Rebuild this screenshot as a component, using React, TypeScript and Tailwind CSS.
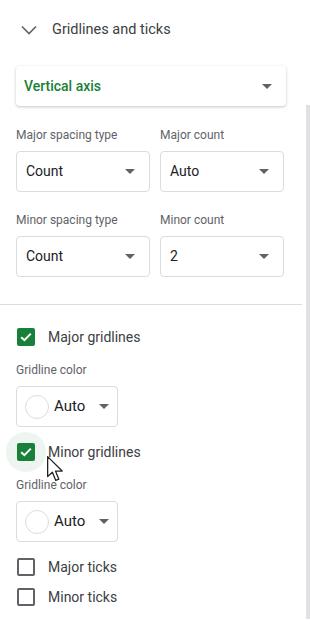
import React from 'react';

const Caret = () => (
  <svg width="10" height="5" viewBox="0 0 10 5" className="shrink-0">
    <path d="M0 0 L10 0 L5 5 Z" fill="#5f6368" />
  </svg>
);

const Select = ({ value, width }: { value: string; width: string }) => (
  <div className={`${width} h-[41px] border border-[#dadce0] rounded-[4px] flex items-center justify-between pl-[9px] pr-[14px]`}>
    <span className="text-[14px] text-[#202124]">{value}</span>
    <Caret />
  </div>
);

const ColorButton = () => (
  <div className="w-[102px] h-[41px] border border-[#dadce0] rounded-[4px] flex items-center pl-[8px]">
    <div className="w-[24px] h-[24px] rounded-full border border-[#dadce0] bg-white" />
    <span className="ml-[5px] text-[15px] text-[#202124]">Auto</span>
    <span className="ml-[14px]"><Caret /></span>
  </div>
);

const Checkbox = ({ checked, label, halo }: { checked: boolean; label: string; halo?: boolean }) => (
  <div className="flex items-center h-[18px] pl-[17px]">
    <div className="relative w-[18px] h-[18px]">
      {halo && <div className="absolute -left-[11px] -top-[11px] w-[40px] h-[40px] rounded-full bg-[#eef5f0]" />}
      {checked ? (
        <div className="relative w-[18px] h-[18px] rounded-[2px] bg-[#188038] flex items-center justify-center">
          <svg width="12" height="10" viewBox="0 0 12 10">
            <path d="M1.2 5.2 L4.4 8.2 L10.8 1.6" stroke="white" strokeWidth="2" fill="none" />
          </svg>
        </div>
      ) : (
        <div className="relative w-[18px] h-[18px] rounded-[2px] border-2 border-[#5f6368]" />
      )}
    </div>
    <span className="relative ml-[13px] text-[14px] text-[#3c4043]">{label}</span>
  </div>
);

const Label = ({ children }: { children: React.ReactNode }) => (
  <div className="text-[12px] leading-[16px] text-[#5f6368]">{children}</div>
);

export default function App() {
  return (
    <div className="relative w-[310px] h-[629px] bg-white flex overflow-hidden" style={{ fontFamily: 'Roboto, "Liberation Sans", sans-serif' }}>
      <div className="w-[302px] h-full rounded-tr-[10px] bg-white">
        {/* Header */}
        <div className="h-[58px] flex items-center pl-[21px] pt-[1px]">
          <svg width="16" height="10" viewBox="0 0 16 10">
            <path d="M1 1.5 L8 8.5 L15 1.5" stroke="#5f6368" strokeWidth="1.6" fill="none" />
          </svg>
          <span className="ml-[15px] text-[14.5px] text-[#3c4043]">Gridlines and ticks</span>
        </div>

        {/* Axis dropdown */}
        <div className="mt-[8px] mx-[16px] h-[40px] rounded-[4px] bg-white shadow-[0_1px_3px_rgba(60,64,67,0.3)] flex items-center justify-between pl-[8px] pr-[14px]">
          <span className="text-[14px] font-medium text-[#188038]">Vertical axis</span>
          <Caret />
        </div>

        {/* Spacing */}
        <div className="px-[16px] mt-[21px] flex gap-[10px]">
          <div>
            <Label>Major spacing type</Label>
            <div className="mt-[8px]"><Select value="Count" width="w-[134px]" /></div>
          </div>
          <div>
            <Label>Major count</Label>
            <div className="mt-[8px]"><Select value="Auto" width="w-[124px]" /></div>
          </div>
        </div>
        <div className="px-[16px] mt-[20px] flex gap-[10px]">
          <div>
            <Label>Minor spacing type</Label>
            <div className="mt-[8px]"><Select value="Count" width="w-[134px]" /></div>
          </div>
          <div>
            <Label>Minor count</Label>
            <div className="mt-[8px]"><Select value="2" width="w-[124px]" /></div>
          </div>
        </div>

        <div className="mt-[27px] h-px bg-[#dadce0]" />

        <div className="mt-[23px]">
          <Checkbox checked label="Major gridlines" />
        </div>
        <div className="px-[16px] mt-[16px]">
          <Label>Gridline color</Label>
          <div className="mt-[8px]"><ColorButton /></div>
        </div>

        <div className="mt-[16px]">
          <Checkbox checked halo label="Minor gridlines" />
        </div>
        <div className="px-[16px] mt-[16px]">
          <Label>Gridline color</Label>
          <div className="mt-[8px]"><ColorButton /></div>
        </div>

        <div className="mt-[16px]">
          <Checkbox checked={false} label="Major ticks" />
        </div>
        <div className="mt-[12px]">
          <Checkbox checked={false} label="Minor ticks" />
        </div>
      </div>

      {/* Scrollbar */}
      <div className="ml-[4px] w-[4px] mt-[105px] mb-[10px] bg-[#e1e1e4]" />

      {/* Mouse cursor */}
      <svg className="absolute left-[47px] top-[456px]" width="18" height="27" viewBox="0 0 14 21">
        <path d="M0.5 0.5 L0.5 16 L4.2 12.6 L6.8 19 L9.2 18 L6.6 11.7 L11.8 11.7 Z" fill="white" stroke="#222" strokeWidth="1" strokeLinejoin="round" />
      </svg>
    </div>
  );
}
